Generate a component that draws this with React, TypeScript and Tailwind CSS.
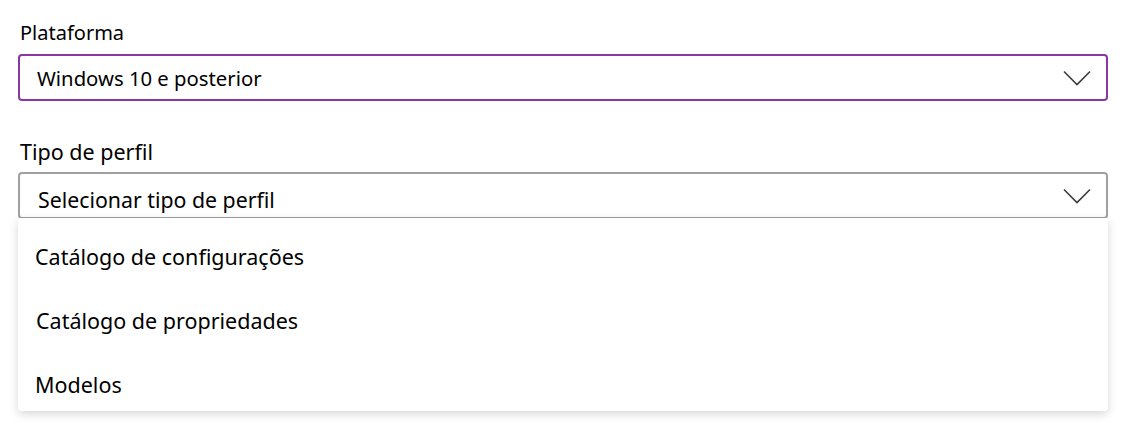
import React from 'react';

const Chevron = () => (
  <svg width="28" height="16" viewBox="0 0 28 16" fill="none" className="shrink-0">
    <path d="M1 1.5 L14 14.5 L27 1.5" stroke="#3b3b3b" strokeWidth="1.6" />
  </svg>
);

const options = ['Catálogo de configurações', 'Catálogo de propriedades', 'Modelos'];

export default function App() {
  return (
    <div
      className="w-[1124px] h-[442px] bg-white text-black pl-[18px] pr-[16px] pt-[20px]"
      style={{ fontFamily: '"Noto Sans", "Open Sans", sans-serif' }}
    >
      <div className="text-[20px] leading-[26px] pl-[2px]">Plataforma</div>
      <div className="mt-[8px] h-[47px] border-2 border-[#8a35a6] rounded-[4px] flex items-center justify-between pl-[17px] pr-[15px]">
        <span className="text-[20.3px] leading-[26px]">Windows 10 e posterior</span>
        <Chevron />
      </div>

      <div className="mt-[38px] text-[21.5px] leading-[26px] pl-[2px]">Tipo de perfil</div>
      <div className="relative mt-[7px]">
        <div className="h-[47px] border-2 border-[#a0a0a0] rounded-[4px] flex items-center justify-between pl-[18px] pr-[15px]">
          <span className="text-[21.3px] leading-[26px] mt-[8px]">Selecionar tipo de perfil</span>
          <Chevron />
        </div>
        <div className="absolute left-0 right-0 top-[46px] bg-white rounded-b-[4px] shadow-[0_3px_10px_rgba(0,0,0,0.16)] pt-[19px] pb-[6px] flex flex-col gap-[24px]">
          {options.map((o, i) => (
            <div key={o} className={`h-[40px] flex items-center text-[21.5px] ${i === 1 ? 'pl-[18px]' : 'pl-[17px]'}`}>
              {o}
            </div>
          ))}
        </div>
      </div>
    </div>
  );
}
